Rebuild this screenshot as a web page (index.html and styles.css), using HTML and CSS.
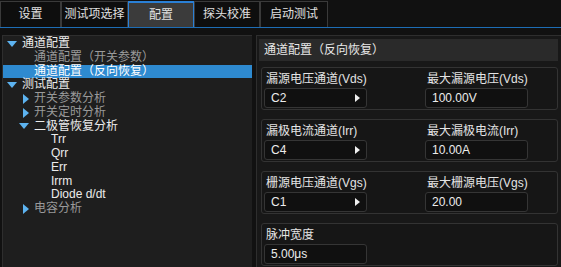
FILE: index.html
```html
<!DOCTYPE html>
<html lang="zh">
<head>
    <meta charset="UTF-8">
    <title>配置</title>
    <link rel="stylesheet" href="styles.css">
</head>
<body>

    <div class="tabs">
        <div class="tab tab-1">设置</div>
        <div class="tab tab-2">测试项选择</div>
        <div class="tab tab-3 active">配置</div>
        <div class="tab tab-4">探头校准</div>
        <div class="tab tab-5">启动测试</div>
    </div>

    <div class="main">
        <div class="tree">
            <div class="row lv0"><span class="arrow down"></span>通道配置</div>
            <div class="row lv1 dim">通道配置（开关参数）</div>
            <div class="row lv1 selected">通道配置（反向恢复）</div>
            <div class="row lv0"><span class="arrow down"></span>测试配置</div>
            <div class="row lv1 dim"><span class="arrow right"></span>开关参数分析</div>
            <div class="row lv1 dim"><span class="arrow right"></span>开关定时分析</div>
            <div class="row lv1"><span class="arrow down"></span>二极管恢复分析</div>
            <div class="row lv2">Trr</div>
            <div class="row lv2">Qrr</div>
            <div class="row lv2">Err</div>
            <div class="row lv2">Irrm</div>
            <div class="row lv2">Diode d/dt</div>
            <div class="row lv1 dim"><span class="arrow right"></span>电容分析</div>
        </div>

        <div class="panel">
            <div class="panel-title">通道配置（反向恢复）</div>

            <div class="group">
                <div class="field">
                    <div class="label">漏源电压通道(Vds)</div>
                    <div class="input select">C2<span class="caret"></span></div>
                </div>
                <div class="field">
                    <div class="label">最大漏源电压(Vds)</div>
                    <div class="input">100.00V</div>
                </div>
            </div>

            <div class="group">
                <div class="field">
                    <div class="label">漏极电流通道(Irr)</div>
                    <div class="input select">C4<span class="caret"></span></div>
                </div>
                <div class="field">
                    <div class="label">最大漏极电流(Irr)</div>
                    <div class="input">10.00A</div>
                </div>
            </div>

            <div class="group">
                <div class="field">
                    <div class="label">栅源电压通道(Vgs)</div>
                    <div class="input select">C1<span class="caret"></span></div>
                </div>
                <div class="field">
                    <div class="label">最大栅源电压(Vgs)</div>
                    <div class="input">20.00</div>
                </div>
            </div>

            <div class="group">
                <div class="field">
                    <div class="label">脉冲宽度</div>
                    <div class="input">5.00μs</div>
                </div>
            </div>
        </div>
    </div>

</body>
</html>
```

FILE: styles.css
```css
body {
    margin: 0;
    width: 561px;
    height: 267px;
    overflow: hidden;
    background-color: #111;
    color: #e6e6e6;
    font-family: "Liberation Sans", "Noto Sans CJK SC", sans-serif;
    font-size: 12px;
}

.tabs {
    display: flex;
    height: 26px;
    padding-top: 1px;
    border-bottom: 1px solid #1d6db5;
}

.tab {
    box-sizing: border-box;
    height: 26px;
    line-height: 24px;
    text-align: center;
    background-color: #0e0e0e;
    border: 1px solid #3a3a3a;
    border-bottom: none;
    color: #e0e0e0;
}

.tab-1 { width: 61px; }
.tab-2 { width: 67px; }
.tab-3 { width: 66px; }
.tab-4 { width: 66px; }
.tab-5 { width: 68px; }

.tab.active {
    background-color: #3b3b3b;
    border-color: #2a80d6;
    border-width: 2px 1px 0 1px;
}

.main {
    display: flex;
    padding-top: 7px;
    height: 233px;
}

.tree {
    width: 249px;
    margin-left: 2px;
    padding-top: 1px;
    background-color: #1e1e1e;
    border-top: 1px solid #2e2e2e;
    border-left: 1px solid #2e2e2e;
}

.row {
    height: 13.75px;
    line-height: 13.75px;
    display: flex;
    align-items: center;
    white-space: nowrap;
    color: #ececec;
}

.row.dim {
    color: #9a9a9a;
}

.row.selected {
    background-color: #2e8ad0;
    color: #fff;
}

.lv0 { padding-left: 4px; }
.lv1 { padding-left: 31px; }
.lv1 .arrow { margin-left: -11px; }
.lv1 .arrow.down { margin-left: -15px; }
.lv2 { padding-left: 48px; }

.arrow {
    display: inline-block;
    width: 0;
    height: 0;
    margin-right: 5px;
}

.arrow.down {
    border-left: 5px solid transparent;
    border-right: 5px solid transparent;
    border-top: 6px solid #5db3f0;
}

.arrow.right {
    border-top: 5px solid transparent;
    border-bottom: 5px solid transparent;
    border-left: 6px solid #5db3f0;
}

.panel {
    flex: 1;
    margin-left: 4px;
    padding: 3px 3px 0 4px;
    background-color: #181818;
    border-top: 1px solid #2e2e2e;
    border-left: 1px solid #2e2e2e;
}

.panel-title {
    height: 22px;
    line-height: 22px;
    padding-left: 5px;
    margin-left: -2px;
    margin-bottom: 6px;
    background-color: #2a2a2a;
    color: #e8e8e8;
}

.group {
    display: flex;
    gap: 58px;
    height: 41px;
    margin-bottom: 9px;
    padding: 0 2px;
    background-color: #161616;
    border: 1px solid #333;
    border-radius: 3px;
}

.field {
    width: 103px;
}

.label {
    height: 20px;
    line-height: 22px;
    padding-left: 2px;
    color: #e4e4e4;
}

.input {
    position: relative;
    box-sizing: border-box;
    height: 20px;
    line-height: 19px;
    padding-left: 6px;
    background-color: #101010;
    border: 1px solid #353535;
    border-radius: 3px;
    color: #ececec;
}

.caret {
    position: absolute;
    right: 6px;
    top: 5px;
    width: 0;
    height: 0;
    border-top: 4px solid transparent;
    border-bottom: 4px solid transparent;
    border-left: 5px solid #f0f0f0;
}
```
